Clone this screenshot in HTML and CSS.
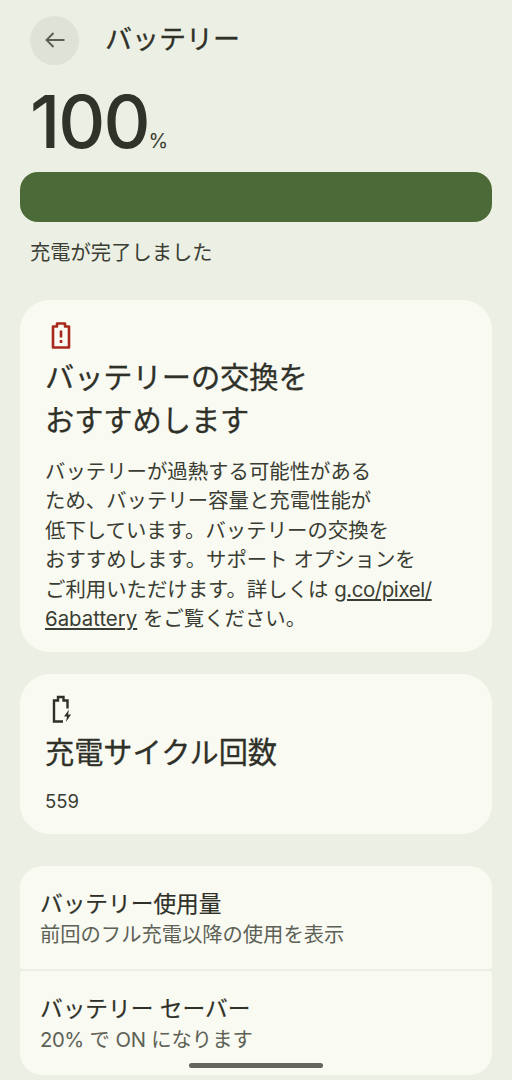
FILE: index.html
```html
<!DOCTYPE html>
<html lang="ja">
<head>
<meta charset="utf-8">
<title>バッテリー</title>
<link rel="stylesheet" href="styles.css">
</head>
<body>
<div class="screen">
  <header class="top">
    <div class="back">
      <svg width="24" height="24" viewBox="0 0 24 24" fill="none" stroke="#5a5f52" stroke-width="1.9"><path d="M21.500 12H3.500M10.500 5l-7 7 7 7"/></svg>
    </div>
    <h1 class="title">バッテリー</h1>
  </header>
  <div class="level"><span class="num">100</span><span class="pct">%</span></div>
  <div class="bar"></div>
  <p class="status">充電が完了しました</p>

  <section class="card warn">
    <svg class="ico" width="24" height="30" viewBox="0 0 24 30" fill="none"><path d="M4 6.500h4V3.500h8v3h4v21H4z" stroke="#a9281d" stroke-width="2.600" stroke-linejoin="round"/><path d="M12 10.500v7M12 20v3" stroke="#a9281d" stroke-width="2.600"/></svg>
    <h2 class="head">バッテリーの交換を<br>おすすめします</h2>
    <p class="body">バッテリーが過熱する可能性がある<br>ため、バッテリー容量と充電性能が<br>低下しています。バッテリーの交換を<br>おすすめします。サポート オプションを<br>ご利用いただけます。詳しくは <u class="latin">g.co/pixel/</u><br><u>6abattery</u> をご覧ください。</p>
  </section>

  <section class="card cycle">
    <svg class="ico" width="24" height="30" viewBox="0 0 24 30" fill="none"><path d="M14 27.500H5V6.500h4V3h5.500v3.500h4v8" stroke="#2f3129" stroke-width="2.400"/><path d="M20 15.500l-5 7h3l-1 5.500 5-7.500h-3z" fill="#2f3129"/></svg>
    <h2 class="head">充電サイクル回数</h2>
    <p class="count">559</p>
  </section>

  <div class="list">
    <div class="row first">
      <div class="row-title">バッテリー使用量</div>
      <div class="row-sub">前回のフル充電以降の使用を表示</div>
    </div>
    <div class="row last">
      <div class="row-title">バッテリー セーバー</div>
      <div class="row-sub"><span class="latin">20%</span> で <span class="latin">ON</span> になります</div>
    </div>
  </div>
  <div class="nav-pill"></div>
</div>
</body>
</html>
```

FILE: styles.css
```css
* { box-sizing: border-box; }
html, body { margin: 0; padding: 0; }
body { width: 512px; height: 1080px; overflow: hidden; background: #ecefe3; font-family: Inter, "Noto Sans CJK JP", sans-serif; color: #2f3129; }
.screen { position: relative; height: 1080px; padding: 16px 20px 0; }
.top { display: flex; align-items: center; gap: 26px; margin-left: 10px; height: 48px; }
.back { width: 49px; height: 49px; border-radius: 50%; background: #dfe3d7; display: flex; align-items: center; justify-content: center; }
.title { margin: 0; font-size: 27px; font-weight: 400; line-height: 46px; -webkit-text-stroke: 0.3px #2f3129; }
.level { margin: 16px 0 0 10px; height: 74px; display: flex; align-items: baseline; }
.num { font-size: 73px; font-weight: 500; line-height: 84px; letter-spacing: -2px; color: #30332a; }
.pct { font-size: 20px; margin-left: 0; color: #3a3d33; }
.bar { margin-top: 18px; height: 50px; border-radius: 18px; background: #4c6a37; }
.status { margin: 18px 0 0 10px; font-size: 20.300px; line-height: 26px; color: #3a3d33; }
.card { background: #f9faf2; border-radius: 30px; padding: 20px 25px; }
.warn { margin-top: 34px; height: 352px; }
.cycle { margin-top: 22px; height: 160px; }
.ico { display: block; margin-left: 4px; }
.head { margin: 0; font-size: 29.200px; font-weight: 400; line-height: 43px; -webkit-text-stroke: 0.3px #2f3129; }
.warn .head { margin-top: 6px; }
.cycle .head { margin-top: 7px; }
.body { margin: 14.500px 0 0; font-size: 20.400px; line-height: 29.600px; color: #3a3d33; }
.count { margin: 14px 0 0; font-size: 18.500px; line-height: 26px; color: #3a3d33; }
.latin { letter-spacing: -0.400px; }
.list { margin-top: 32px; display: flex; flex-direction: column; gap: 2px; }
.row { background: #f9faf2; padding: 22px 20px 0; height: 104px; }
.first { border-radius: 22px 22px 4px 4px; height: 103px; }
.last { border-radius: 4px 4px 22px 22px; }
.row-title { font-size: 22.700px; line-height: 32px; color: #2f3129; -webkit-text-stroke: 0.2px #2f3129; }
.row-sub { font-size: 20.300px; line-height: 30px; color: #5d6156; }
.nav-pill { position: absolute; left: 189px; top: 1063px; width: 134px; height: 5px; border-radius: 3px; background: #63665c; }
```
